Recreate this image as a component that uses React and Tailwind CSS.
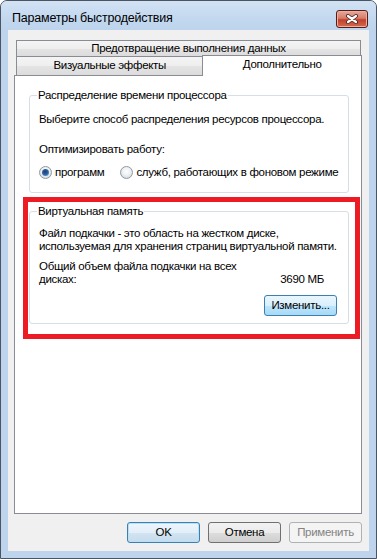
import React from "react";

const tabBg =
  "bg-[linear-gradient(#f4f4f4_0%,#eeeeee_50%,#e4e4e4_51%,#dcdcdc_100%)]";

const Radio = ({ checked }) => (
  <span className="relative flex h-[13px] w-[13px] shrink-0 items-center justify-center rounded-full border border-[#8e9aa6] bg-[radial-gradient(circle_at_50%_40%,#ffffff_0%,#eef0f2_45%,#c9ced3_100%)]">
    {checked && (
      <span className="h-[7px] w-[7px] rounded-full bg-[radial-gradient(circle_at_45%_40%,#1b3f73_0%,#2c5e9e_45%,#7fb4e6_100%)]" />
    )}
  </span>
);

const Button = ({ children, kind = "normal" }) => {
  const styles = {
    normal:
      "border-[#707070] bg-[linear-gradient(#f2f2f2_0%,#ebebeb_50%,#dddddd_51%,#cfcfcf_100%)] text-black",
    primary:
      "border-[#3c7fb1] bg-[linear-gradient(#eef6fc_0%,#e2eef8_50%,#d3e4f2_51%,#c6dbee_100%)] text-black shadow-[inset_0_0_0_1px_#b8e0f7]",
    hover:
      "border-[#3c7fb1] bg-[linear-gradient(#eaf6fd_0%,#d9f0fc_50%,#bee6fd_51%,#a7d9f5_100%)] text-black",
    disabled: "border-[#adb2b5] bg-[#f4f4f4] text-[#838383]",
  };
  return (
    <div
      className={`flex h-[21px] w-[73px] items-center justify-center rounded-[3px] border leading-none ${styles[kind]}`}
    >
      {children}
    </div>
  );
};

const GroupBox = ({ title, className, children }) => (
  <div
    className={`relative w-[320px] whitespace-nowrap rounded-[3px] border border-[#d5dfe5] px-[9px] ${className}`}
  >
    <span className="absolute left-[7px] top-[-8px] bg-white px-[1px] leading-[15px]">
      {title}
    </span>
    {children}
  </div>
);

export default function App() {
  return (
    <div className="h-[559px] w-[377px] bg-white">
      <div className="flex h-full flex-col rounded-t-[7px] border border-[#4a5462] bg-[#bdd4ec] font-['Liberation_Sans',Arial,sans-serif] text-[11.5px] tracking-[-0.3px] text-black">
        <div className="flex h-[29px] items-start justify-between rounded-t-[6px] bg-[linear-gradient(#d2e2f4_0%,#c3d8ef_60%,#bdd4ec_100%)] pl-[11px] pr-[8px]">
          <span className="mt-[8px] text-[12.5px] leading-[18px] tracking-[-0.2px] text-black">
            Параметры быстродействия
          </span>
          <div className="mt-[9px] flex h-[18px] w-[32px] items-center justify-center rounded-[3px] border border-[#5b1b12] bg-[linear-gradient(#e6a89c_0%,#d77d69_45%,#c2412a_55%,#d26a52_100%)] shadow-[inset_0_0_0_1px_#e9b1a4]">
            <svg width="14" height="10" viewBox="0 0 14 10">
              <path
                d="M3 2 L11 8 M11 2 L3 8"
                stroke="#4b2a28"
                strokeWidth="4"
                strokeLinecap="round"
              />
              <path
                d="M3 2 L11 8 M11 2 L3 8"
                stroke="#ffffff"
                strokeWidth="2.2"
                strokeLinecap="round"
              />
            </svg>
          </div>
        </div>

        <div className="mx-[7px] flex h-[521px] flex-col bg-[#f0f0f0] pt-[10px]">
          <div className="ml-[6px] w-[348px]">
            <div
              className={`ml-[2px] flex h-[16px] w-[345px] items-center justify-center border-x border-t border-[#898c95] ${tabBg}`}
            >
              Предотвращение выполнения данных
            </div>
            <div className="flex h-[19px] items-end">
              <div
                className={`ml-[2px] flex h-[19px] w-[187px] items-center justify-center border-l border-t border-[#898c95] ${tabBg}`}
              >
                Визуальные эффекты
              </div>
              <div className="relative z-10 -mb-px flex h-[21px] w-[160px] items-center justify-center border-x border-t border-[#898c95] bg-white pb-[3px]">
                Дополнительно
              </div>
            </div>
            <div className="h-[439px] border border-[#898c95] bg-white pl-[14px]">
              <GroupBox
                title="Распределение времени процессора"
                className="mt-[19px] h-[98px] pt-[16px] leading-[15px]"
              >
                <p>Выберите способ распределения ресурсов процессора.</p>
                <p className="mt-[15px]">Оптимизировать работу:</p>
                <div className="mt-[8px] flex items-center">
                  <Radio checked />
                  <span className="ml-[3px]">программ</span>
                  <span className="ml-[16px]">
                    <Radio />
                  </span>
                  <span className="ml-[3px]">
                    служб, работающих в фоновом режиме
                  </span>
                </div>
              </GroupBox>

              <div className="-ml-[6px] mt-[4px] h-[142px] w-[337px] border-[5px] border-[#ed1c24]">
                <GroupBox
                  title="Виртуальная память"
                  className="ml-[1px] mt-[9px] h-[113px] pt-[15px] leading-[13px]"
                >
                  <p>
                    Файл подкачки - это область на жестком диске,
                    <br />
                    используемая для хранения страниц виртуальной памяти.
                  </p>
                  <div className="mt-[7px] flex items-end justify-between pr-[15px]">
                    <p>
                      Общий объем файла подкачки на всех
                      <br />
                      дисках:
                    </p>
                    <span>3690 МБ</span>
                  </div>
                  <div className="mr-[2px] mt-[9px] flex justify-end">
                    <Button kind="hover">Изменить...</Button>
                  </div>
                </GroupBox>
              </div>
            </div>
          </div>

          <div className="mt-[8px] flex justify-end gap-[8px] pr-[7px]">
            <Button kind="primary">OK</Button>
            <Button>Отмена</Button>
            <Button kind="disabled">Применить</Button>
          </div>
        </div>
      </div>
    </div>
  );
}
